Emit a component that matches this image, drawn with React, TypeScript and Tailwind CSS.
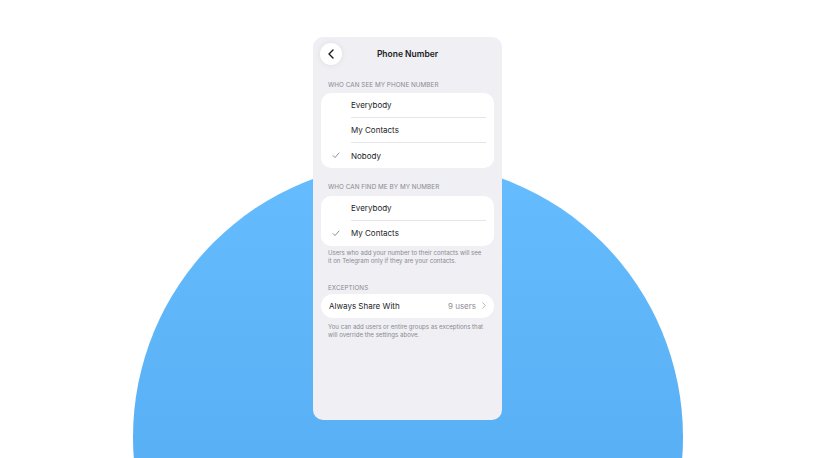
import React from 'react';

type Row = { label: string; checked?: boolean };

const CheckMark: React.FC = () => (
  <svg width="8" height="7" viewBox="0 0 8 7" fill="none">
    <path d="M1 3.6 L3 5.6 L7 1" stroke="#8e8e93" strokeWidth="1" strokeLinecap="round" strokeLinejoin="round" />
  </svg>
);

const SectionTitle: React.FC<{ children: React.ReactNode }> = ({ children }) => (
  <div className="px-[15px] text-[6.3px] uppercase tracking-[0.01em] text-[#8a8a8e] leading-none">{children}</div>
);

const Note: React.FC<{ children: React.ReactNode; className?: string }> = ({ children, className = '' }) => (
  <p className={`pl-[15px] pr-[18px] text-[6.1px] leading-[8px] text-[#8a8a8e] ${className}`}>{children}</p>
);

const OptionGroup: React.FC<{ rows: Row[] }> = ({ rows }) => (
  <div className="mx-[8px] mt-[5px] bg-white rounded-[10px] overflow-hidden">
    {rows.map((r, i) => (
      <div key={r.label} className="flex items-center h-[25px]">
        <div className="w-[30px] flex justify-end pr-[11px]">{r.checked && <CheckMark />}</div>
        <div
          className={`flex-1 h-full flex items-center text-[8px] text-[#1c1c1e] mr-[8px] ${
            i < rows.length - 1 ? 'border-b border-[#e6e6ea]' : ''
          }`}
        >
          {r.label}
        </div>
      </div>
    ))}
  </div>
);

const App: React.FC = () => {
  return (
    <div
      className="relative w-[815px] h-[458px] overflow-hidden bg-white"
      style={{ fontFamily: 'Inter, "Noto Sans", sans-serif' }}
    >
      {/* blue backdrop disc */}
      <div className="absolute left-[133px] top-[162px] w-[550px] h-[550px] rounded-full bg-gradient-to-b from-[#65bcfe] to-[#4ea6ec]" />

      {/* phone settings screen */}
      <div className="relative mx-auto mt-[37px] w-[189px] h-[383px] rounded-[10px] bg-[#efeff4] pt-[1px]">
        <div className="relative h-[32px] flex items-center justify-center">
          <button className="absolute left-[7px] top-[5px] w-[22px] h-[22px] rounded-full bg-white shadow-[0_0_6px_rgba(0,0,0,0.08)] flex items-center justify-center">
            <svg width="6" height="10" viewBox="0 0 6 10" fill="none">
              <path d="M5 1 L1 5 L5 9" stroke="#1c1c1e" strokeWidth="1.4" strokeLinecap="round" strokeLinejoin="round" />
            </svg>
          </button>
          <span className="text-[8.5px] font-semibold text-[#1c1c1e]">Phone Number</span>
        </div>

        <div className="mt-[12px]">
          <SectionTitle>Who can see my phone number</SectionTitle>
          <OptionGroup rows={[{ label: 'Everybody' }, { label: 'My Contacts' }, { label: 'Nobody', checked: true }]} />
        </div>

        <div className="mt-[16px]">
          <SectionTitle>Who can find me by my number</SectionTitle>
          <OptionGroup rows={[{ label: 'Everybody' }, { label: 'My Contacts', checked: true }]} />
          <Note className="mt-[3px]">
            Users who add your number to their contacts will see it on Telegram only if they are your contacts.
          </Note>
        </div>

        <div className="mt-[20px]">
          <SectionTitle>Exceptions</SectionTitle>
          <div className="mx-[8px] mt-[3px] h-[24px] bg-white rounded-full flex items-center pl-[8px] pr-[8px]">
            <span className="flex-1 text-[8px] text-[#1c1c1e]">Always Share With</span>
            <span className="text-[8px] text-[#8e8e93] mr-[6px]">9 users</span>
            <svg width="4" height="7" viewBox="0 0 4 7" fill="none">
              <path d="M0.7 0.7 L3.3 3.5 L0.7 6.3" stroke="#b0b0b5" strokeWidth="0.9" strokeLinecap="round" strokeLinejoin="round" />
            </svg>
          </div>
          <Note className="mt-[5px]">
            You can add users or entire groups as exceptions that will override the settings above.
          </Note>
        </div>
      </div>
    </div>
  );
};

export default App;
